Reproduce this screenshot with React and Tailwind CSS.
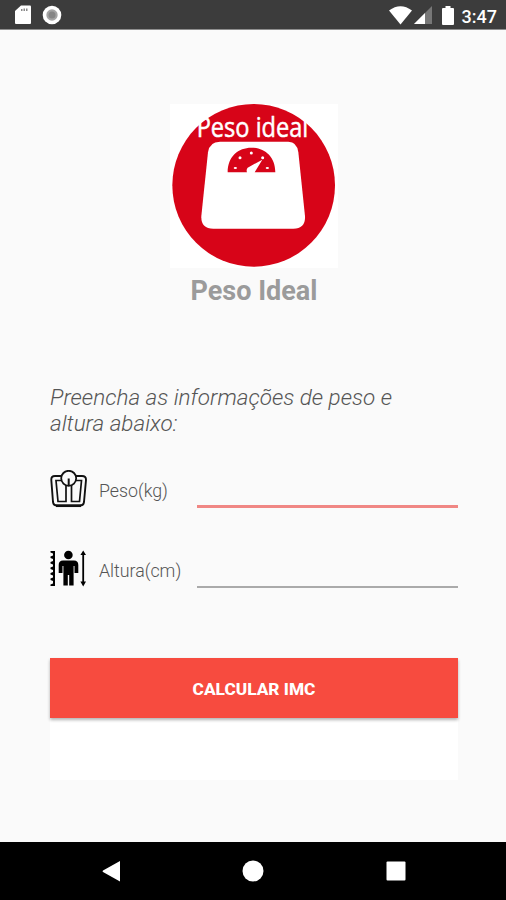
import React, { useState } from 'react';

const StatusBar = () => (
    <header className="h-[29px] shrink-0 bg-[#3c3c3c] border-b border-[#8e8e8e] box-content flex items-center justify-between pl-[15px] pr-[9px] text-white">
        <div className="flex items-center gap-2.5">
            <svg width="17" height="20" viewBox="0 0 17 20">
                <path d="M6 0.500H15Q16 0.500 16 1.500V18Q16 19 15 19H1Q0 19 0 18V6Z" fill="#fff" />
                <path d="M6 4h1.500v2H6zM8.500 3.500h1.500v2.500H8.500zM11 3.500h1.500v2.500H11z" fill="#8a8a8a" />
            </svg>
            <svg width="20" height="20" viewBox="0 0 20 20">
                <circle cx="10" cy="10" r="9.300" fill="#fff" />
                <circle cx="10" cy="10" r="5.700" fill="#a4a4a4" />
                <circle cx="10" cy="10" r="3.500" fill="#858585" />
            </svg>
        </div>
        <div className="flex items-center">
            <svg className="mt-0.5" width="23" height="19" viewBox="0 0 23 19">
                <path d="M0 4.500Q11.500 -4 23 4.500L11.500 18.500Z" fill="#fff" />
            </svg>
            <svg className="ml-0.5 mt-px" width="18" height="18" viewBox="0 0 18 18">
                <path d="M18 0V18H0Z" fill="#777" />
                <path d="M11 7V18H0Z" fill="#fff" />
            </svg>
            <svg className="ml-2.5 mt-0.5" width="12" height="19" viewBox="0 0 12 19">
                <path d="M3.500 0h5v2H11q1 0 1 1v15q0 1-1 1H1q-1 0-1-1V3q0-1 1-1h2.500z" fill="#fff" />
            </svg>
            <span className="ml-2 mt-[4px] text-[18px] leading-none font-medium">3:47</span>
        </div>
    </header>
);

const Logo = () => (
    <svg className="bg-white" width="168" height="164" viewBox="30 27 504 492">
        <circle cx="281" cy="271" r="244" fill="#d70418" />
        <text x="110" y="125" fontSize="82" textLength="335" lengthAdjust="spacingAndGlyphs" fill="#fff" stroke="#fff" strokeWidth="1.500" fontFamily='"Open Sans", "Noto Sans", sans-serif'>Peso ideal</text>
        <path d="M180 140H385Q411 140 415 172L435 363Q437 401 400 401H160Q122 401 124 363L144 172Q148 140 180 140Z" fill="#fff" />
        <path d="M203 232C203 184 235 158 274 158S346 184 346 232H284L307 194L263 218Q258 224 261 232Z" fill="#d70418" />
        <g fill="#fff">
            <ellipse cx="226" cy="219" rx="5" ry="3" />
            <circle cx="240" cy="188" r="4.500" />
            <circle cx="274" cy="174" r="4.500" />
            <circle cx="308" cy="188" r="4.500" />
            <ellipse cx="322" cy="219" rx="5" ry="3" />
        </g>
    </svg>
);

const ScaleIcon = () => (
    <svg width="38" height="38" viewBox="0 0 38 38" fill="none" stroke="#111">
        <path d="M11 6H5Q1 6 1.300 10L3 32Q3.500 35.500 7 35.500H30Q33.500 35.500 34 32L36 10Q36.200 6 32 6H26" strokeWidth="1.900" />
        <path d="M12 10.500H6L8 31.500H16V14M25.500 10.500H31.500L29.500 31.500H21.500V14" strokeWidth="1.700" />
        <path d="M6 35.800H31" strokeWidth="2.500" />
        <circle cx="18.700" cy="8.300" r="7.500" strokeWidth="1.800" fill="#fafafa" />
        <path d="M18.700 8.500V16" strokeWidth="2" />
    </svg>
);

const HeightIcon = () => (
    <svg width="38" height="38" viewBox="0 0 38 38" fill="#000">
        <path d="M0.500 1H5V36H0.500V34.500L3 33.500V31L0.500 30V28.500L3 27.500V25.500L0.500 24.500V23L3 22V20L0.500 19V17.500L3 16.500V14.500L0.500 13.500V12L3 11V9L0.500 8V6.500L3 5.500V3.500L0.500 2.500Z" />
        <circle cx="18.400" cy="5" r="4.300" />
        <path d="M13 10.500H24Q28.300 10.500 28.300 15V23H24.500V16H23.600V35.500H19.200V25H17.800V35.500H13.400V16H12.500V23H8.700V15Q8.700 10.500 13 10.500Z" />
        <path d="M33.200 0.500L36 5H34.100V31.500H36L33.200 36.500L30.400 31.500H32.300V5H30.400Z" />
    </svg>
);

export default function App() {
    const [peso, setPeso] = useState('');
    const [altura, setAltura] = useState('');
    const [resultado, setResultado] = useState('');

    const calcular = () => {
        const imc = Number(peso) / (Number(altura) / 100) ** 2;
        if (Number.isFinite(imc)) setResultado(`IMC: ${imc.toFixed(1)}`);
    };

    return (
        <div className="h-[900px] w-full flex flex-col overflow-hidden bg-[#fafafa] font-[Roboto,sans-serif]">
            <StatusBar />

            <main className="flex-1 flex flex-col pl-[50px] pr-12 pt-[74px]">
                <div className="flex flex-col items-center">
                    <Logo />
                    <h1 className="mt-[7px] text-[27px] leading-8 font-bold text-[#9b9b9b]">Peso Ideal</h1>
                </div>

                <p className="mt-[77px] text-[22.5px] leading-[26px] font-light italic text-[#555]">
                    Preencha as informações de peso e<br />altura abaixo:
                </p>

                <label className="mt-[34px] h-[40px] flex items-start">
                    <ScaleIcon />
                    <span className="ml-[11px] mt-[9px] w-[98px] text-[17.8px] leading-6 font-light text-[#555]">Peso(kg)</span>
                    <input className="flex-1 min-w-0 h-[38px] border-b-[3px] border-[#f08784] outline-none text-lg" value={peso} onChange={e => setPeso(e.target.value)} />
                </label>

                <label className="mt-[40px] h-[40px] flex items-start">
                    <HeightIcon />
                    <span className="ml-[11px] mt-[9px] w-[98px] text-[17.8px] leading-6 font-light text-[#555]">Altura(cm)</span>
                    <input className="flex-1 min-w-0 h-[38px] border-b-2 border-[#aaa] outline-none text-lg" value={altura} onChange={e => setAltura(e.target.value)} />
                </label>

                <button onClick={calcular} className="relative mt-[68px] h-[60px] pt-1 bg-[#f74b3f] shadow-[0_2px_3px_rgba(0,0,0,0.3)] text-white text-[17.3px] font-extrabold">
                    CALCULAR IMC
                </button>
                <div className="h-[62px] bg-white flex items-center justify-center text-lg text-[#555]">{resultado}</div>
            </main>

            <nav className="h-[58px] shrink-0 bg-black flex items-center justify-between pl-[102px] pr-[100px]">
                <svg width="18" height="22" viewBox="0 0 18 22"><path d="M18 1V21.500L1 12Q0 11 1 10.500Z" fill="#fff" /></svg>
                <svg width="22" height="22" viewBox="0 0 22 22"><circle cx="11" cy="11" r="10.500" fill="#fff" /></svg>
                <svg width="20" height="20" viewBox="0 0 20 20"><rect x="0.500" y="0.500" width="19" height="19" rx="1" fill="#fff" /></svg>
            </nav>
        </div>
    );
}
